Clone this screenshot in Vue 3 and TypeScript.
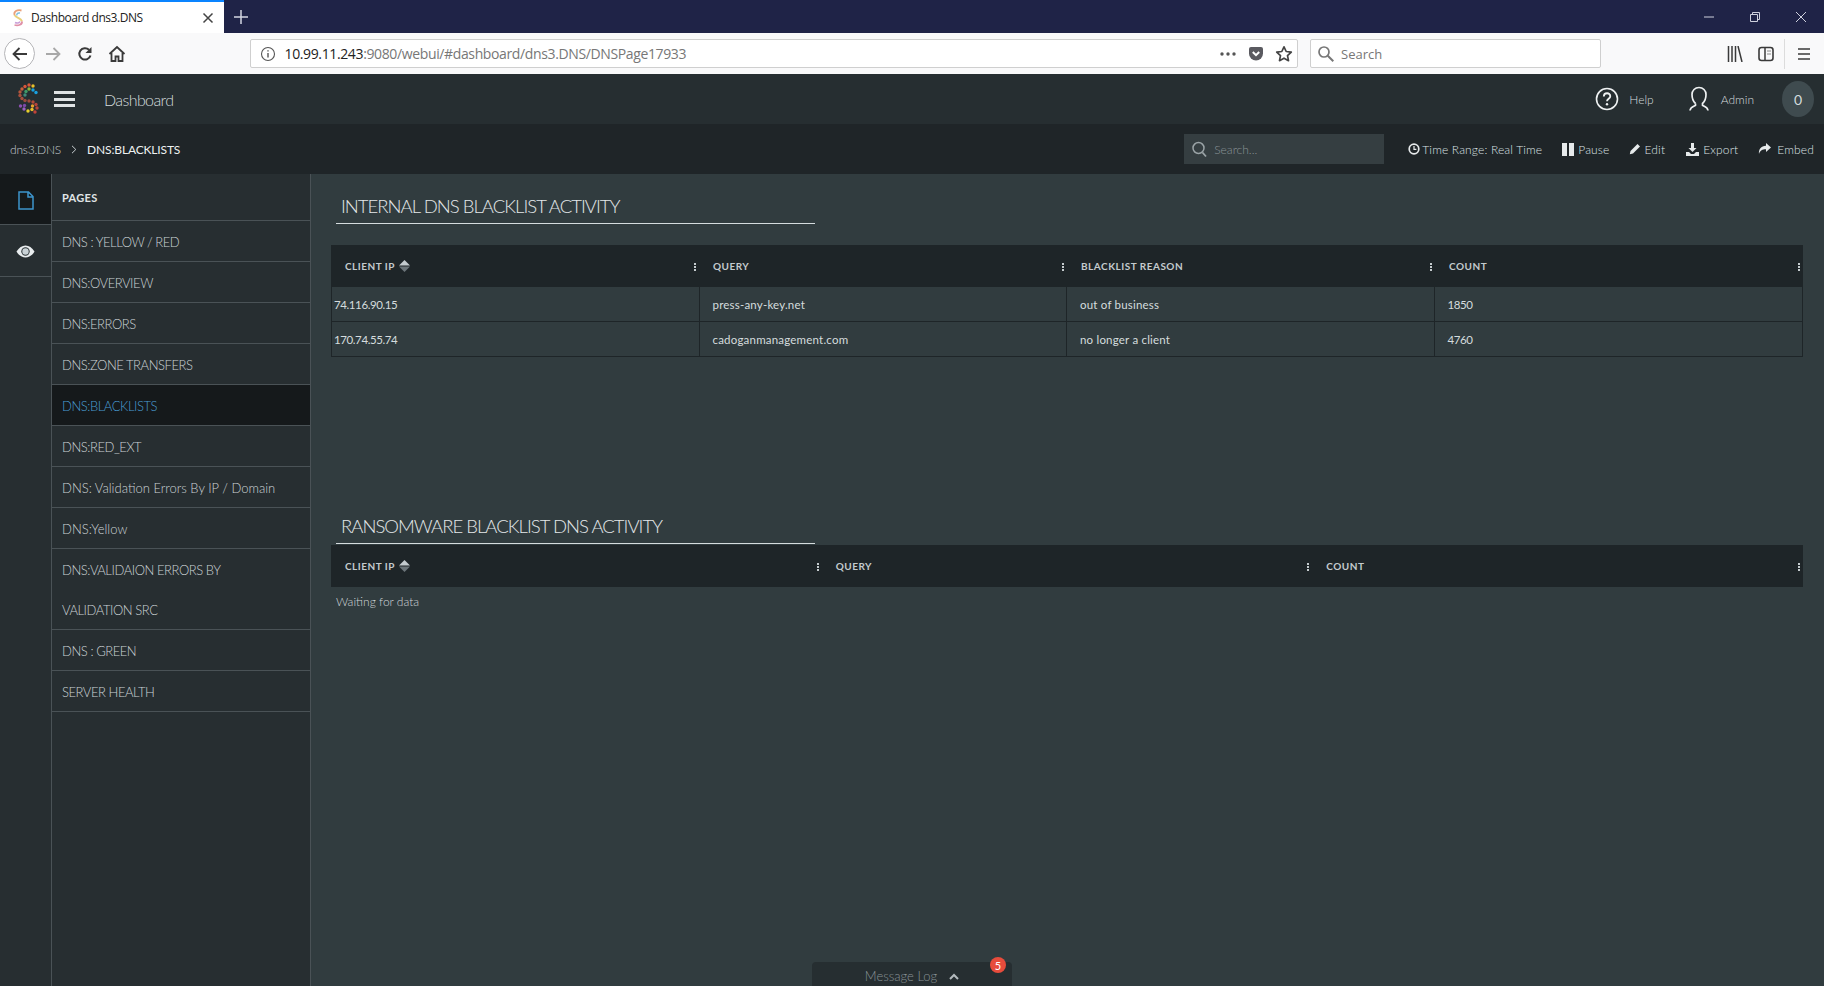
<script setup lang="ts">
const pages: string[] = [
  'DNS : YELLOW / RED', 'DNS:OVERVIEW', 'DNS:ERRORS', 'DNS:ZONE TRANSFERS', 'DNS:BLACKLISTS', 'DNS:RED_EXT',
  'DNS: Validation Errors By IP / Domain', 'DNS:Yellow', 'DNS:VALIDAION ERRORS BY VALIDATION SRC', 'DNS : GREEN', 'SERVER HEALTH'
]
const rows: string[][] = [
  ['74.116.90.15', 'press-any-key.net', 'out of business', '1850'],
  ['170.74.55.74', 'cadoganmanagement.com', 'no longer a client', '4760']
]
const head1 = ['CLIENT IP', 'QUERY', 'BLACKLIST REASON', 'COUNT']
const head2 = ['CLIENT IP', 'QUERY', 'COUNT']
const isCaps = (p: string): boolean => p === p.toUpperCase()
const isNum = (c: string): boolean => /^[0-9.]+$/.test(c)
const logoDots: { x: number; y: number; c: string }[] = [
  { x: 12, y: 2, c: '#d9573a' }, { x: 8, y: 3.500, c: '#d9573a' }, { x: 5, y: 6, c: '#c9603c' }, { x: 3, y: 9, c: '#b5553c' },
  { x: 3, y: 12.500, c: '#a8503c' }, { x: 5, y: 15.500, c: '#a8503c' }, { x: 8, y: 17.500, c: '#9a4a3c' }, { x: 16, y: 3, c: '#e8c02c' },
  { x: 12, y: 6, c: '#8ab83c' }, { x: 9, y: 8.500, c: '#3f9a68' }, { x: 8, y: 12, c: '#3f8a78' }, { x: 16, y: 7, c: '#18a0e0' },
  { x: 19, y: 9.500, c: '#18a0e0' }, { x: 12, y: 18, c: '#a04a3c' }, { x: 16, y: 19, c: '#b04a3a' }, { x: 19, y: 21.500, c: '#b5443a' },
  { x: 20, y: 25, c: '#b5443a' }, { x: 15.500, y: 23, c: '#e8a02c' }, { x: 15, y: 26.500, c: '#e8c02c' }, { x: 11, y: 28, c: '#e8d02c' },
  { x: 7, y: 26, c: '#9a5fc0' }, { x: 3.500, y: 23, c: '#8a50b0' }, { x: 7.500, y: 22.500, c: '#7a48a8' }, { x: 18, y: 29, c: '#c0433a' }
]
</script>

<template>
  <div class="page">
    <div class="tabbar">
      <div class="tab">
        <svg class="favicon" width="16" height="20" viewBox="0 0 16 20" fill="none"><path d="M11.500 2.500C7 1.500 3.500 3.500 4.500 7" stroke="#e8a07a" stroke-width="1.800"/><path d="M4.500 7c1 3 7 3 7.500 6.500" stroke="#e8d07a" stroke-width="1.800"/><path d="M12 13.500c.4 3-3.500 4.500-7.500 3.500" stroke="#e090a8" stroke-width="1.800"/><path d="M10 5C7.500 4.500 6.500 6 7 7.500" stroke="#7cc0de" stroke-width="1.500"/><path d="M5 14.500c2 1 4.500.5 5-1" stroke="#c9a0d8" stroke-width="1.500"/></svg>
        <span class="tab-title">Dashboard dns3.DNS</span>
        <svg class="tab-x" width="12" height="12" viewBox="0 0 12 12"><path d="M1.500 1.500l9 9M10.500 1.500l-9 9" stroke="#444" stroke-width="1.500"/></svg>
      </div>
      <svg class="plus" width="16" height="16" viewBox="0 0 16 16"><path d="M8 1v14M1 8h14" stroke="#d4d6e2" stroke-width="1.500"/></svg>
      <div class="winctl">
        <svg width="12" height="12" viewBox="0 0 12 12"><path d="M1 6h10" stroke="#cfd1de" stroke-width="1"/></svg>
        <svg width="12" height="12" viewBox="0 0 12 12" fill="none"><path d="M1.500 3.500h7v7h-7zM3.500 3.500v-2h7v7h-2" stroke="#cfd1de" stroke-width="1"/></svg>
        <svg width="12" height="12" viewBox="0 0 12 12"><path d="M1 1l10 10M11 1L1 11" stroke="#cfd1de" stroke-width="1"/></svg>
      </div>
    </div>

    <div class="toolbar">
      <div class="back">
        <svg width="18" height="18" viewBox="0 0 18 18" fill="none"><path d="M16 9H2.500M8.500 3L2.500 9l6 6" stroke="#3a3a3a" stroke-width="1.800"/></svg>
      </div>
      <svg class="fwd" width="18" height="18" viewBox="0 0 18 18" fill="none"><path d="M2 9h13.500M9.500 3l6 6-6 6" stroke="#a8a8a8" stroke-width="1.800"/></svg>
      <svg class="reload" width="16" height="16" viewBox="0 0 16 16" fill="none"><path d="M13.500 9.500A5.700 5.700 0 1 1 12 3.800" stroke="#3a3a3a" stroke-width="2"/><path d="M14.500 1v6h-6z" fill="#3a3a3a"/></svg>
      <svg class="home" width="18" height="18" viewBox="0 0 18 18" fill="none"><path d="M1.500 9L9 2l7.500 7" stroke="#3a3a3a" stroke-width="1.800"/><path d="M3.500 8v8h4v-4.500h3V16h4V8" stroke="#3a3a3a" stroke-width="1.800"/></svg>
      <div class="urlbar">
        <svg width="16" height="16" viewBox="0 0 16 16" fill="none"><circle cx="8" cy="8" r="6.500" stroke="#555" stroke-width="1.100"/><path d="M8 7v4.500M8 4.200v1.400" stroke="#555" stroke-width="1.400"/></svg>
        <span class="url"><span class="url-dark">10.99.11.243</span>:9080/webui/#dashboard/dns3.DNS/DNSPage17933</span>
        <svg class="dots" width="16" height="4" viewBox="0 0 16 4"><circle cx="2" cy="2" r="1.700" fill="#555"/><circle cx="8" cy="2" r="1.700" fill="#555"/><circle cx="14" cy="2" r="1.700" fill="#555"/></svg>
        <svg class="pocket" width="16" height="16" viewBox="0 0 16 16"><path d="M1 3a2 2 0 0 1 2-2h10a2 2 0 0 1 2 2v4.500a7 7 0 0 1-14 0z" fill="#5a5a60"/><path d="M4.800 6L8 9.200 11.200 6" stroke="#fff" stroke-width="2" fill="none"/></svg>
        <svg class="star" width="18" height="18" viewBox="0 0 18 18" fill="none"><path d="M9 1.800l2.200 4.700 5.100.6-3.800 3.500 1 5.100L9 13.200l-4.500 2.500 1-5.100L1.700 7.100l5.100-.6z" stroke="#444" stroke-width="1.700" stroke-linejoin="round"/></svg>
      </div>
      <div class="searchbar">
        <svg width="18" height="18" viewBox="0 0 18 18" fill="none"><circle cx="7" cy="7" r="5" stroke="#777" stroke-width="1.700"/><path d="M10.800 10.800l5.500 5.500" stroke="#777" stroke-width="2"/></svg>
        <span>Search</span>
      </div>
      <div class="tool-right">
        <svg class="lib" width="16" height="16" viewBox="0 0 16 16" fill="none"><path d="M1.500 0v16M5 0v16M8.500 0v16M11 0l4 16" stroke="#3a3a3a" stroke-width="1.500"/></svg>
        <svg class="side" width="16" height="16" viewBox="0 0 16 16" fill="none"><rect x="1" y="1.500" width="14" height="13" rx="2.500" stroke="#3a3a3a" stroke-width="1.600"/><path d="M7 2v12" stroke="#3a3a3a" stroke-width="1.500"/><path d="M9 5h4M9 8h4" stroke="#8a8a8a" stroke-width="1"/></svg>
        <span class="tool-sep"></span>
        <svg class="menu" width="14" height="14" viewBox="0 0 14 14"><path d="M1 2h12M1 7h12M1 12h12" stroke="#3a3a3a" stroke-width="1.600"/></svg>
      </div>
    </div>

    <header class="apphead">
      <svg class="logo" width="22" height="32" viewBox="0 0 22 32"><circle v-for="(d, i) in logoDots" :key="i" :cx="d.x" :cy="d.y" r="1.700" :fill="d.c"/></svg>
      <span class="burger"><i></i><i></i><i></i></span>
      <span class="app-title">Dashboard</span>
      <div class="head-right">
        <svg class="help-ic" width="24" height="24" viewBox="0 0 24 24" fill="none"><circle cx="12" cy="12" r="10.500" stroke="#eef1f2" stroke-width="1.600"/><path d="M8.800 9.500c0-4.300 6.500-4.300 6.500-.3 0 2.500-3.300 2.600-3.300 5" stroke="#eef1f2" stroke-width="1.800"/><circle cx="12" cy="17.300" r="1.200" fill="#eef1f2"/></svg>
        <span class="help-t">Help</span>
        <svg class="adm-ic" width="22" height="26" viewBox="0 0 22 26" fill="none"><path d="M7.500 17.500c-3.500-3-3.500-7-3.500-9C4 4.500 7 1.500 11 1.500s7 3 7 7c0 2 0 6-3.500 9v1.800c2 1.400 5 1.500 5.500 5.200M7.500 17.500v1.800c-2 1.400-5 1.500-5.500 5.200" stroke="#eef1f2" stroke-width="1.700"/></svg>
        <span class="adm-t">Admin</span>
        <span class="bubble">0</span>
      </div>
    </header>

    <div class="crumbbar">
      <span class="crumb1">dns3.DNS</span>
      <svg class="crumb-sep" width="6" height="9" viewBox="0 0 6 9" fill="none"><path d="M1 .8l3.800 3.700L1 8.200" stroke="#c8cfd2" stroke-width="1"/></svg>
      <span class="crumb2">DNS:BLACKLISTS</span>
      <div class="crumb-right">
        <div class="dash-search">
          <svg width="15" height="17" viewBox="0 0 15 17" fill="none"><circle cx="6.500" cy="7" r="5.500" stroke="#9aa3a6" stroke-width="1.500"/><path d="M10.500 11.500l3.500 4" stroke="#9aa3a6" stroke-width="1.800"/></svg>
          <span>Search...</span>
        </div>
        <span class="act act-time"><svg width="12" height="12" viewBox="0 0 12 12" fill="none"><circle cx="6" cy="6" r="4.800" stroke="#e6eaeb" stroke-width="1.700"/><path d="M6 3v3.300h2.400" stroke="#e6eaeb" stroke-width="1.200"/></svg>Time Range: Real Time</span>
        <span class="act act-pause"><svg width="12" height="13" viewBox="0 0 12 13"><path d="M0 0h5v13H0zM7 0h5v13H7z" fill="#e6eaeb"/></svg>Pause</span>
        <span class="act act-edit"><svg width="12" height="12" viewBox="0 0 12 12"><path d="M8.500 1l2.500 2.500L4 10.500 0.800 11.200 1.500 8z" fill="#e6eaeb"/></svg>Edit</span>
        <span class="act act-export"><svg width="13" height="13" viewBox="0 0 13 13"><path d="M5 0h3v5h2.500L6.500 9 2.500 5H5zM0 9h3l2 2h3l2-2h3v4H0z" fill="#e6eaeb"/></svg>Export</span>
        <span class="act act-embed"><svg width="13" height="12" viewBox="0 0 13 12"><path d="M8 0l5 4.500L8 9V6.300C4.500 6.300 2 7.500 1 11 .3 6.500 3 2.900 8 2.700z" fill="#e6eaeb"/></svg>Embed</span>
      </div>
    </div>

    <div class="body">
      <aside class="rail">
        <div class="rail-tab active">
          <svg width="16" height="19" viewBox="0 0 16 19" fill="none"><path d="M1 1h9.500L15 5.500V18H1zM10 1v5h5" stroke="#3d94cc" stroke-width="1.500"/></svg>
        </div>
        <div class="rail-tab second">
          <svg width="19" height="13" viewBox="0 0 19 13"><path d="M.5 6.500C3 2.500 6 .5 9.500.5s6.500 2 9 6c-2.500 4-5.500 6-9 6s-6.500-2-9-6z" fill="#e8ecee"/><circle cx="9.500" cy="6.500" r="4.200" fill="#2a3235"/><circle cx="9.500" cy="6.500" r="3.200" fill="#c9d2d6"/></svg>
        </div>
      </aside>
      <nav class="pages">
        <div class="pages-head">PAGES</div>
        <div
          v-for="p in pages"
          :key="p"
          class="page-item"
          :class="{ current: p === 'DNS:BLACKLISTS', caps: isCaps(p), wrap: p.includes('VALIDAION') }"
        >{{ p }}</div>
      </nav>
      <main class="main">
        <h2 class="title first">INTERNAL DNS BLACKLIST ACTIVITY</h2>
        <div class="table four">
          <div class="thead">
            <div v-for="(h, i) in head1" :key="h" class="th">
              <span>{{ h }}</span>
              <svg v-if="i === 0" class="sort" width="11" height="12" viewBox="0 0 11 12"><path d="M5.500 0L11 5.500H0z" fill="#c4cbce"/><path d="M5.500 12L11 6.500H0z" fill="#6c7579"/></svg>
              <i class="grip"></i>
            </div>
          </div>
          <div v-for="r in rows" :key="r[0]" class="tr">
            <div v-for="(c, i) in r" :key="i" class="td" :class="{ num: isNum(c) }">{{ c }}</div>
          </div>
        </div>
        <h2 class="title second">RANSOMWARE BLACKLIST DNS ACTIVITY</h2>
        <div class="table three">
          <div class="thead">
            <div v-for="(h, i) in head2" :key="h" class="th">
              <span>{{ h }}</span>
              <svg v-if="i === 0" class="sort" width="11" height="12" viewBox="0 0 11 12"><path d="M5.500 0L11 5.500H0z" fill="#c4cbce"/><path d="M5.500 12L11 6.500H0z" fill="#6c7579"/></svg>
              <i class="grip"></i>
            </div>
          </div>
        </div>
        <p class="waiting">Waiting for data</p>
      </main>
    </div>

    <div class="msglog">
      <span>Message Log</span>
      <svg width="10" height="7" viewBox="0 0 10 7" fill="none"><path d="M1 6l4-4 4 4" stroke="#b4bbbe" stroke-width="2"/></svg>
      <b class="badge">5</b>
    </div>
  </div>
</template>

<style>
html, body { margin: 0; background: #313c3f; overflow: hidden; }
</style>

<style scoped>
.page { position: relative; width: 1824px; height: 986px; display: flex; flex-direction: column; overflow: hidden; font-family: Lato, "Open Sans", sans-serif; color: #d5dcde; }
.tabbar { height: 33px; background: #1f2347; display: flex; align-items: center; flex: none; }
.tab { width: 224px; height: 33px; box-sizing: border-box; background: #fff; border-top: 2px solid #0a84ff; display: flex; align-items: center; padding-left: 10px; }
.favicon { flex: none; }
.tab-title { margin-left: 5px; font: 12px "Open Sans", sans-serif; color: #222; white-space: nowrap; letter-spacing: -.45px; }
.tab-x { margin-left: auto; margin-right: 10px; }
.plus { margin-left: 9px; }
.winctl { margin-left: auto; display: flex; gap: 34px; padding-right: 17px; }
.toolbar { height: 41px; background: #f9f9fa; display: flex; align-items: center; flex: none; box-sizing: border-box; color: #333; }
.back { width: 31px; height: 31px; margin-left: 4px; border: 1px solid #b5b5b8; border-radius: 50%; display: flex; align-items: center; justify-content: center; background: #fff; box-sizing: border-box; flex: none; }
.fwd { margin-left: 9px; flex: none; }
.reload { margin-left: 15px; flex: none; }
.home { margin-left: 15px; flex: none; }
.urlbar { margin-left: 124px; width: 1048px; height: 29px; box-sizing: border-box; background: #fff; border: 1px solid #cfcfcf; border-radius: 2px; display: flex; align-items: center; padding-left: 9px; flex: none; }
.url { margin-left: 8.500px; font: 14px "Open Sans", sans-serif; color: #777; white-space: nowrap; letter-spacing: -.37px; }
.url-dark { color: #222; }
.dots { margin-left: auto; }
.pocket { margin-left: 12px; }
.star { margin-left: 11px; margin-right: 4px; }
.searchbar { margin-left: 12px; width: 291px; height: 29px; box-sizing: border-box; background: #fff; border: 1px solid #cfcfcf; border-radius: 2px; display: flex; align-items: center; padding-left: 6px; font: 13px "Open Sans", sans-serif; color: #777; flex: none; }
.searchbar span { margin-left: 6px; }
.tool-right { display: flex; align-items: center; flex: 1; }
.lib { margin-left: 126px; flex: none; }
.side { margin-left: 15px; flex: none; }
.tool-sep { width: 1px; height: 30px; background: #dcdcdc; margin-left: 10px; flex: none; }
.menu { margin-left: 12px; flex: none; }

.apphead { height: 50px; background: #262e31; display: flex; align-items: center; flex: none; }
.logo { margin-left: 17px; flex: none; }
.burger { margin-left: 15px; width: 21px; display: flex; flex-direction: column; gap: 3.500px; }
.burger i { height: 3px; background: #dfe3e4; display: block; }
.app-title { margin-left: 29px; font-size: 16px; letter-spacing: -.6px; color: #d5dcde; font-weight: 300; }
.head-right { margin-left: auto; display: flex; align-items: center; padding-right: 10px; font-size: 12px; font-weight: 300; }
.help-t { margin-left: 10px; }
.adm-ic { margin-left: 34px; }
.adm-t { margin-left: 11px; }
.bubble { margin-left: 28px; width: 32px; height: 36px; border-radius: 50%; background: #3f4b4f; display: flex; align-items: center; justify-content: center; font-size: 14px; font-weight: 400; }

.crumbbar { height: 50px; background: #1f2528; display: flex; align-items: center; flex: none; font-size: 12px; }
.crumb1 { margin-left: 10px; color: #c8cfd2; letter-spacing: -.2px; font-weight: 300; }
.crumb-sep { margin-left: 10px; }
.crumb2 { margin-left: 10px; color: #eef1f2; letter-spacing: -.15px; }
.crumb-right { margin-left: auto; display: flex; align-items: center; padding-right: 10px; font-weight: 300; }
.dash-search { width: 200px; height: 30px; background: #353e41; display: flex; align-items: center; padding-left: 8px; box-sizing: border-box; color: #8a9397; }
.dash-search span { margin-left: 7px; }
.act { display: inline-flex; align-items: center; gap: 4px; color: #dde2e4; white-space: nowrap; letter-spacing: .15px; }
.act-time { margin-left: 24px; gap: 2px; }
.act-pause { margin-left: 20px; }
.act-edit { margin-left: 19px; }
.act-export { margin-left: 21px; }
.act-embed { margin-left: 20px; gap: 6px; }

.body { flex: 1; display: flex; min-height: 0; }
.rail { width: 51px; flex: none; background: #272e31; border-right: 1px solid #4a5256; }
.rail-tab { height: 51px; display: flex; align-items: center; justify-content: center; box-sizing: border-box; border-bottom: 1px solid #4a5256; padding-top: 2px; }
.rail-tab.active { background: #15191b; }
.rail-tab.second { height: 52px; }
.pages { width: 258px; flex: none; background: #272e31; border-right: 1px solid #4a5256; }
.pages-head { height: 47px; box-sizing: border-box; border-bottom: 1px solid #4a5256; display: flex; align-items: center; padding-left: 10px; font-size: 11px; font-weight: 700; color: #e0e5e6; letter-spacing: .3px; }
.page-item { height: 41px; padding: 0 10px; box-sizing: border-box; border-bottom: 1px solid #4a5256; font-size: 13px; line-height: 42px; color: #ccd3d6; font-weight: 300; white-space: nowrap; }
.page-item.caps { letter-spacing: -.45px; }
.page-item.wrap { height: 81px; line-height: 40.500px; padding-top: .5px; white-space: normal; padding-right: 70px; }
.page-item.current { background: #15191b; color: #4a9ed4; }

.main { flex: 1; min-width: 0; background: #313c3f; padding: 0 21px 0 20px; }
.title { margin: 0 0 0 5px; width: 479px; height: 50px; box-sizing: border-box; border-bottom: 1px solid #d5dcde; padding: 20px 0 0 5px; font-size: 18.500px; line-height: 24px; letter-spacing: -.97px; font-weight: 300; color: #e4e8ea; white-space: nowrap; }
.title.second { margin-top: 137px; }
.table.four { margin-top: 21px; height: 112px; }
.table.three { margin-top: 1px; }
.thead { display: grid; height: 42px; background: #1e2528; }
.four .thead, .four .tr { grid-template-columns: repeat(4, 1fr); }
.three .thead { grid-template-columns: repeat(3, 1fr); }
.th { position: relative; display: flex; align-items: center; padding-left: 14px; font-size: 10px; font-weight: 700; letter-spacing: .5px; color: #c4cbce; }
.sort { margin-left: 4px; margin-top: -1px; }
.grip { position: absolute; right: 3px; top: 18px; width: 2px; height: 8px; background: repeating-linear-gradient(to bottom, #c4cbce 0 2px, transparent 2px 3px); }
.tr { display: grid; height: 35px; border-bottom: 1px solid #1e2528; border-left: 1px solid #1e2528; border-right: 1px solid #1e2528; box-sizing: border-box; }
.td { display: flex; align-items: center; padding-left: 13px; border-right: 1px solid #1e2528; font-size: 11.500px; letter-spacing: .2px; color: #d5dcde; }
.td.num { letter-spacing: -.4px; }
.td:first-child { padding-left: 2px; }
.td:last-child { border-right: 0; }
.waiting { margin: 7px 0 0 5px; font-size: 12px; line-height: 15px; color: #d0d6d9; font-weight: 300; }

.msglog { position: absolute; left: 812px; top: 962px; width: 200px; height: 24px; background: #262e31; border-radius: 4px 4px 0 0; display: flex; align-items: center; justify-content: center; gap: 12px; padding-top: 4px; box-sizing: border-box; font-size: 13px; font-weight: 300; color: #8a9397; }
.badge { position: absolute; left: 178px; top: -5px; width: 16px; height: 16px; border-radius: 50%; background: #e74c3c; color: #fff; font-size: 11px; font-weight: 400; display: flex; align-items: center; justify-content: center; }
</style>
